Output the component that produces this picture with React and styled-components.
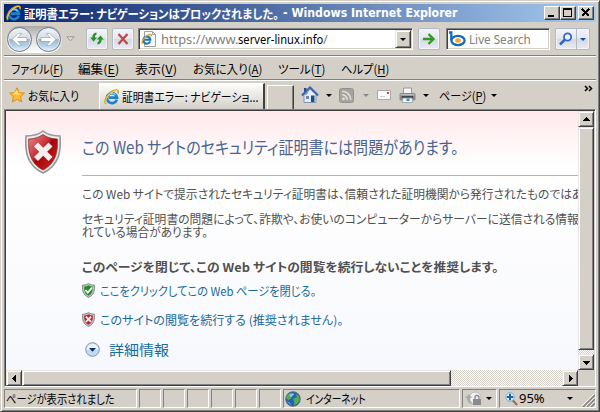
import React, { useLayoutEffect, useRef, useState } from 'react';
import styled, { createGlobalStyle, css } from 'styled-components';

const Global = createGlobalStyle`
  * { box-sizing: border-box; }
  body { margin: 0; background: #d4d0c8; }
  svg { display: block; flex: none; }
`;

const jp = '"Noto Sans CJK JP", sans-serif';
const raised = css`
  background: #d4d0c8;
  border: 1px solid;
  border-color: #e8e6e1 #404040 #404040 #e8e6e1;
  box-shadow: inset 1px 1px #fff, inset -1px -1px #808080;
`;
const row = css`display: flex; align-items: center;`;

const Slot = styled.span`
  display: block;
  flex: none;
  width: ${p => p.$w}px;
  height: ${p => p.$size + 1}px;
  margin-left: ${p => p.$ml || 0}px;
  font: ${p => (p.$bold ? 700 : 400)} ${p => p.$size}px/${p => p.$size + 1}px ${p => p.$font || jp};
  font-feature-settings: "palt";
  color: ${p => p.$color || '#000'};
`;
const Ink = styled.span`
  display: block;
  width: max-content;
  white-space: pre;
  transform-origin: 0 50%;
  u { text-underline-offset: 2px; }
`;

/* Condenses a line of text to the given width, whatever font metrics are in use. */
function Label({ w, size = 12, ml, bold, font, color, children }) {
  const ref = useRef(null);
  const [scale, setScale] = useState(1);
  useLayoutEffect(() => { setScale(w / ref.current.offsetWidth); }, [w]);
  return (
    <Slot $w={w} $size={size} $ml={ml} $bold={bold} $font={font} $color={color}>
      <Ink ref={ref} style={{ transform: `scaleX(${scale})` }}>{children}</Ink>
    </Slot>
  );
}

const Window = styled.div`
  width: 600px; height: 412px; overflow: hidden;
  display: flex; flex-direction: column;
  padding: 2px;
  background: #d4d0c8;
  border: 1px solid;
  border-color: #d4d0c8 #404040 #404040 #d4d0c8;
  box-shadow: inset 1px 1px #fff, inset -1px -1px #808080;
`;
const Frame = styled.div`
  display: flex; flex-direction: column; margin: 1px 1px 0;
`;
const TitleBar = styled.div`
  ${row}
  height: 18px; flex: none; padding: 0 2px;
  background: linear-gradient(90deg, #0a246a, #a6caf0);
`;
const Captions = styled.div`display: flex; margin-left: auto;`;
const CaptionButton = styled.div`
  ${raised}
  width: 16px; height: 14px; margin-left: ${p => p.$gap || 0}px;
  border-top-color: #fff; border-left-color: #fff; box-shadow: inset -1px -1px #808080;
`;
const Bar = styled.div`
  ${row}
  flex: none;
  height: ${p => p.$h}px;
  ${p => p.$line && 'border-bottom: 1px solid #fff; box-shadow: inset 0 -1px #808080;'}
`;
const Travel = styled.div`
  ${row}
  justify-content: space-between;
  width: 56px; height: 27px; margin-left: 2px; padding: 0 1px;
  border-radius: 14px;
  background: linear-gradient(#a9a9a9, #dedcd8 45%, #fff);
`;
const Orb = styled.div`
  ${row}
  justify-content: center;
  width: 25px; height: 25px; border-radius: 50%;
  border: 1px solid #6f7884;
  background: linear-gradient(#f2f5f8 0, #d5dbe3 46%, #a5b3c4 50%, #b4d4ea 78%, #e4f5fd 100%);
  box-shadow: inset 0 0 0 1px #e6edf3;
`;
const Tool = styled.div`
  ${row}
  justify-content: center; flex: none;
  width: 22px; height: 22px; margin-left: ${p => p.$ml || 0}px;
  border: 1px solid #b3bac6; border-radius: 2px;
  background: linear-gradient(#f4f5f8, #e4e6ed 50%, #d5d9e4 51%, #e9ebf2);
  box-shadow: inset 0 0 0 1px #f3f4f8;
`;
const SplitTool = styled(Tool)`width: 35px; justify-content: flex-start;`;
const SplitArrow = styled.div`
  ${row}
  justify-content: center; width: 13px; height: 20px; margin-left: auto; border-left: 1px solid #b3bac6;
`;
const Field = styled.div`
  ${row}
  flex: none; width: ${p => p.$w}px; height: 22px; margin-left: ${p => p.$ml}px; padding-left: 2px;
  background: #fff;
  border: 1px solid; border-color: #808080 #fff #fff #808080;
  box-shadow: inset 1px 1px #404040, inset -1px -1px #d4d0c8;
`;
const DropButton = styled.div`
  ${raised} ${row}
  justify-content: center; width: 16px; height: 18px; margin: 0 1px 0 auto;
`;
const Tri = styled.i`
  display: block; flex: none; width: 0; height: 0; margin-left: ${p => p.$ml || 0}px;
  border: 3px solid transparent; border-bottom: 0;
  border-top-color: ${p => p.$color || '#000'};
`;
const Tab = styled.div`
  ${row}
  align-self: flex-end; flex: none; width: 166px; height: 26px; margin-left: 20px; padding-left: 4px;
  background: linear-gradient(#fdfdfc, #e4e2dd 60%, #d4d0c8);
  border-top: 1px solid #fff; border-left: 1px solid #fff; border-right: 2px solid #404040;
`;
const NewTab = styled.div`
  align-self: flex-end; flex: none; width: 27px; height: 24px; margin-left: 2px;
  border-top: 1px solid #fff; border-left: 1px solid #fff; border-right: 1px solid #404040;
  box-shadow: inset -1px 0 #808080;
`;
const Gap = styled.span`flex: none; width: ${p => p.$w}px;`;
const Overflow = styled.div`align-self: flex-start; margin: 4px 3px 0 auto;`;

const Viewport = styled.div`
  display: grid; flex: none;
  grid-template: 259px 16px / 572px 16px;
  width: 592px; height: 278px;
  border: 1px solid; border-color: #808080 #fff #fff #808080;
  box-shadow: inset 1px 1px #404040, inset -1px -1px #d4d0c8;
  padding: 1px;
`;
const Page = styled.div`
  display: flex; overflow: hidden; padding: 19px 0 0 18px;
  background: linear-gradient(#ffe8eb 0, #fff 55px, #fdfdfe 120px, #f7f8fd 259px);
`;
const Article = styled.div`width: 501px; margin-left: 20px; flex: none;`;
const Heading = styled.div`
  height: 46px; padding-top: 8px; border-bottom: 1px solid #b0b3bf;
`;
const Line = styled.div`
  ${row}
  height: ${p => p.$h || 14}px; margin-top: ${p => p.$mt || 0}px; margin-left: ${p => p.$ml || 0}px;
`;
const Scroll = styled.div`
  display: flex; flex-direction: ${p => (p.$vertical ? 'column' : 'row')};
  background: repeating-conic-gradient(#fff 0 25%, #d4d0c8 0 50%) 0 0 / 2px 2px;
`;
const ScrollButton = styled.div`
  ${raised} ${row}
  justify-content: center; flex: none; width: 16px; height: 16px;
`;
const Thumb = styled.div`
  ${raised}
  flex: none; width: ${p => p.$w || 16}px; height: ${p => p.$h || 16}px;
  margin: ${p => (p.$h ? '0 0 auto' : '0 auto 0 0')};
`;
const Corner = styled.div`background: #d4d0c8;`;
const Status = styled.div`
  display: flex; gap: 2px; height: 19px; margin-top: 2px; flex: none;
`;
const Pane = styled.div`
  ${row}
  flex: none; width: ${p => p.$w}px; height: 19px; padding-left: 1px;
  border: 1px solid; border-color: #808080 #fff #fff #808080;
`;
const Grip = styled.div`align-self: flex-end; margin-left: auto;`;

const IE = ({ s = 16 }) => (
  <svg width={s} height={s} viewBox="0 0 16 16" fill="none">
    <path d="M12.8 10.7A5 5 0 1 1 13 8.6H5" stroke="#1d80d0" strokeWidth="2.7" />
    <path d="M4.5 6.6A4.1 4.1 0 0 1 11.5 6" stroke="#7ccff7" strokeWidth="1.4" />
    <path d="M2 14.8C-.8 12 4 3.8 10 1.6c3.4-1.2 4.8.3 3.8 2.8" stroke="#d49b20" strokeWidth="1.8" />
    <path d="M2 14C.6 11 5 4.2 10.3 2c2-.8 3.4-.5 3.5.5" stroke="#ffe16b" strokeWidth=".8" />
  </svg>
);
const PageIE = () => (
  <svg width="16" height="16" viewBox="0 0 16 16" fill="none">
    <path d="M3.5.5h8l3 3v12h-11z" fill="#fafafa" stroke="#a0a0a0" />
    <path d="M11.5.5v3h3" stroke="#a0a0a0" />
    <path d="M9.2 10.4A3.6 3.6 0 1 1 9.4 8.8H3.8" stroke="#1673c4" strokeWidth="2" />
    <path d="M1.6 13C-.2 11 3.3 5 8 3.6c2.2-.5 2.6.5 2.2 1.8" stroke="#dba52b" strokeWidth="1.4" />
  </svg>
);
const Arrow = ({ flip }) => (
  <svg width="17" height="15" viewBox="0 0 17 15">
    <path transform={flip ? 'matrix(-1 0 0 1 17 0)' : undefined} d="M1 7.5 7.3 1.6h3.4L6.8 5.5H16v4H6.8l3.900 3.900H7.3z" fill="#fff" stroke="#8496ad" strokeWidth=".6" />
  </svg>
);
const Shield = ({ w, h, kind }) => (
  <svg width={w} height={h} viewBox="0 0 38 44">
    <defs>
      <linearGradient id={`face-${kind}`} x1="0" y1="0" x2="1" y2="1">
        <stop offset="0" stopColor={kind === 'ok' ? '#78bd6d' : '#e58a8a'} />
        <stop offset=".42" stopColor={kind === 'ok' ? '#279b2c' : '#c63035'} />
        <stop offset=".5" stopColor={kind === 'ok' ? '#087d12' : '#a50409'} />
        <stop offset="1" stopColor={kind === 'ok' ? '#3bab3f' : '#d22a22'} />
      </linearGradient>
    </defs>
    <path d="M19 1C14 5 8 6 2 6c-1 14 0 29 17 37C36 35 37 20 36 6 30 6 24 5 19 1z" fill="#e9e9e9" stroke="#969799" strokeWidth="1.6" />
    <path d="M19 4.5C14 8 9 9 4.7 9c-.5 12 1 24 14.3 31C32.3 33 34 21 33.3 9 29 9 24 8 19 4.5z" fill={`url(#face-${kind})`} stroke="#8d2c30" strokeWidth=".8" />
    <path d="m12 14.500 14.500 14.500M26.500 14.500 12 29" fill="none" stroke="#f0eeef" strokeWidth="5.600" />
  </svg>
);
const Badge = ({ ok }) => (
  <svg width="13" height="15" viewBox="0 0 13 15">
    <path d="M6.500.600C4.700 1.700 2.600 2.200.600 2.200c-.300 5.300.400 9.900 5.900 12.200 5.500-2.300 6.200-6.900 5.900-12.200-2 0-4.100-.5-5.900-1.600z" fill="#c6c7c7" stroke="#858788" strokeWidth="1" />
    <path d="M6.500 2.200C5.200 3 3.800 3.400 2.200 3.400c-.1 4.200.5 7.500 4.300 9.400 3.800-1.900 4.400-5.200 4.300-9.400-1.600 0-3-.400-4.300-1.200z" fill={ok ? '#199125' : '#bd252c'} />
    {ok
      ? <path d="m3.500 7 2.300 2.600L10.200 4.500" fill="none" stroke="#fff" strokeWidth="1.800" />
      : <path d="m3.900 4.700 5.200 5.200M9.100 4.700 3.900 9.900" fill="none" stroke="#f6eeee" strokeWidth="1.900" />}
  </svg>
);
const Refresh = () => (
  <svg width="16" height="16" viewBox="0 0 16 16" fill="#279329">
    <path d="M7.500 1.500v2.300C6.300 4.100 5.900 5 5.900 6.500h2.300L4.600 10.500 1 6.500h2.300C3.400 3.500 4.800 1.700 7.500 1.500z" />
    <path d="M8.500 13.500v-2.300c1.200-.3 1.600-1.200 1.600-2.700H7.800l3.600-4 3.600 4h-2.300c-.1 3-1.500 4.800-4.200 5z" />
  </svg>
);
const Cross = () => (
  <svg width="14" height="14" viewBox="0 0 14 14"><path d="m2.500 2 9 10M11.500 2l-9 10" stroke="#bb4a4c" strokeWidth="2.300" /></svg>
);
const Go = () => (
  <svg width="14" height="14" viewBox="0 0 14 14"><path d="M1 7h10M6.500 2l5 5-5 5" fill="none" stroke="#329a22" strokeWidth="2.400" /></svg>
);
const Bing = () => (
  <svg width="17" height="16" viewBox="0 0 17 16" fill="none">
    <path d="M0 1.500h2.300v8" stroke="#1768bd" strokeWidth="2.300" />
    <ellipse cx="9" cy="9.500" rx="6.600" ry="4.600" stroke="#1768bd" strokeWidth="2.300" />
    <ellipse cx="9" cy="9.500" rx="2.700" ry="2.200" fill="#f5a431" />
  </svg>
);
const Magnifier = () => (
  <svg width="16" height="16" viewBox="0 0 16 16" fill="none">
    <path d="m2 13.500 5-5" stroke="#2e69c5" strokeWidth="2.500" />
    <circle cx="9.600" cy="6" r="3.600" stroke="#2e69c5" strokeWidth="1.800" fill="#edf5fd" />
  </svg>
);
const Star = () => (
  <svg width="16" height="16" viewBox="0 0 16 16">
    <path d="m8 .8 2.200 4.700 5.200.600-3.800 3.600 1 5.200L8 12.400l-4.600 2.500 1-5.200L.6 6.100l5.200-.600z" fill="#ffbd2e" stroke="#db8617" strokeWidth=".9" />
    <path d="m8 3 1.300 3.300 3.200.400-2.400 1L4 7z" fill="#ffe184" />
  </svg>
);
const House = () => (
  <svg width="18" height="18" viewBox="0 0 18 18">
    <path d="M3 2h2.500v5H3z" fill="#34477c" />
    <path d="M3 8 9.500 3 15 8v8.500H3z" fill="#e6edf6" stroke="#8294b3" />
    <path d="m1 9.500 8-8 8 8" fill="none" stroke="#3f62a8" strokeWidth="2.200" />
    <path d="M9 2 6 8.500 3 9z" fill="#6f91cb" />
    <path d="M5 10h3v3H5z" fill="#6a8aaf" /><path d="M10 9.500h3.500v6.500H10z" fill="#204b83" />
  </svg>
);
const Rss = () => (
  <svg width="15" height="15" viewBox="0 0 15 15" fill="none">
    <rect x=".5" y=".5" width="14" height="14" rx="2" fill="#a5a4a1" stroke="#929292" />
    <circle cx="4.500" cy="10.800" r="1.400" fill="#e4e2df" />
    <path d="M3.200 6.800a5 5 0 0 1 5 5M3.200 3.200a8.500 8.500 0 0 1 8.500 8.600" stroke="#e4e2df" strokeWidth="1.600" />
  </svg>
);
const Mail = () => (
  <svg width="14" height="10" viewBox="0 0 14 10">
    <path d="M.5.500h13v9H.5z" fill="#fafafa" stroke="#a8a8ab" />
    <path d="M10 2h2v2h-2z" fill="#e33c36" /><path d="M3 6.500h5" stroke="#ccc" />
  </svg>
);
const Printer = () => (
  <svg width="17" height="17" viewBox="0 0 17 17">
    <path d="M4.500 1h8v6h-8z" fill="#f5f5f3" stroke="#999" />
    <rect x=".5" y="6" width="16" height="7.500" rx="1.500" fill="#85878a" />
    <path d="M1.500 7h14v1.500h-14z" fill="#b9bbbd" /><path d="M3 9h11v2H3z" fill="#424548" />
    <path d="M4 11h9l.8 4.500H3.200z" fill="#f4f7fa" stroke="#999" strokeWidth=".8" /><path d="M7.500 11.500h3v2.500h-3z" fill="#368dcc" />
  </svg>
);
const Globe = () => (
  <svg width="16" height="16" viewBox="0 0 16 16">
    <circle cx="8" cy="8" r="7.300" fill="#2362b4" stroke="#555f70" strokeWidth=".8" />
    <path d="M2 4.500 5 2l4 .500-1 2-2 1v2L3.500 9 1 7zM8 8l4-2-1-3 2.500 1 1.300 5-2.800 4-3.500 1.500 1-3z" fill="#5aad4b" />
    <path d="m4 3.500 4-1 1 1-3 3zM2 10l3 2 1 2.500" fill="#79cbe8" />
  </svg>
);
const Expander = () => (
  <svg width="15" height="15" viewBox="0 0 15 15">
    <circle cx="7.500" cy="7.500" r="6.800" fill="#bcdcf3" stroke="#8597b3" />
    <path d="M1.800 7.500a5.700 5.700 0 0 1 11.400 0z" fill="#f0f5fb" />
    <path d="M4 6h7L7.500 9.800z" fill="#102d66" />
  </svg>
);
const Protected = () => (
  <svg width="18" height="16" viewBox="0 0 18 16">
    <circle cx="10" cy="7" r="6" fill="#eee" stroke="#bbb" />
    <path d="m0 7 4-4 3 4H5c0 3 1 5 3 6-4 0-6-3-6-6z" fill="#aaa" />
    <path d="M8 8h8v6H8z" fill="#8a8a8a" /><path d="M10 8V6.500a2 2 0 0 1 4 0V8" fill="none" stroke="#888" strokeWidth="1.300" />
  </svg>
);
const Zoom = () => (
  <svg width="13" height="14" viewBox="0 0 13 14">
    <path d="m7.500 8 4.500 5" stroke="#9b7151" strokeWidth="2.300" />
    <circle cx="5" cy="5" r="4.300" fill="#d4ecfc" stroke="#86adc9" />
    <path d="M5 1.800v6.400M1.800 5h6.400" stroke="#1761ad" strokeWidth="2" />
  </svg>
);
const Point = ({ d }) => (
  <svg width="7" height="7" viewBox="0 0 7 7" shapeRendering="crispEdges"><path d={d} /></svg>
);
const CaptionIcon = ({ d, sw = 2 }) => (
  <svg width="13" height="11" viewBox="0 0 13 11" shapeRendering="crispEdges"><path d={d} fill="none" stroke="#000" strokeWidth={sw} /></svg>
);
const ResizeGrip = () => (
  <svg width="13" height="13" viewBox="0 0 13 13">
    <path d="M1 13 13 1M5 13l8-8M9 13l4-4" stroke="#858585" strokeWidth="1.600" />
    <path d="M0 12 12 0M4 12l8-8M8 12l4-4" stroke="#fff" strokeWidth=".8" />
  </svg>
);

const tahoma = '"DejaVu Sans Condensed", "DejaVu Sans", sans-serif';
const light = '"Noto Sans", sans-serif';
const menus = [
  ['ファイル', 'F', 52, 7], ['編集', 'E', 41, 15], ['表示', 'V', 42, 16],
  ['お気に入り', 'A', 69, 16], ['ツール', 'T', 47, 16], ['ヘルプ', 'H', 48, 16],
];
const link = '#176b9b';
const body = '#505050';

export default function App() {
  return (
    <Window>
      <Global />
      <Frame>
        <TitleBar>
          <IE />
          <Label w={255} ml={2} bold color="#fff">証明書エラー: ナビゲーションはブロックされました。</Label>
          <Label w={174} ml={4} bold color="#fff" font={tahoma}>- Windows Internet Explorer</Label>
          <Captions>
            <CaptionButton><CaptionIcon d="M3 9h6" /></CaptionButton>
            <CaptionButton><CaptionIcon sw={1} d="M2.500 1.500h8v8h-8zM2 2.500h9" /></CaptionButton>
            <CaptionButton $gap={2}><CaptionIcon sw={1.500} d="m3 2 7 7M10 2 3 9" /></CaptionButton>
          </Captions>
        </TitleBar>

        <Bar $h={35} $line>
          <Travel><Orb><Arrow /></Orb><Orb><Arrow flip /></Orb></Travel>
          <Gap $w={4} />
          <svg width="9" height="6" viewBox="0 0 9 6"><path d="M.8.8h7.400l-3.700 4z" fill="#ddd" stroke="#999" /></svg>
          <Tool $ml={11}><Refresh /></Tool>
          <Tool $ml={4}><Cross /></Tool>
          <Field $w={275} $ml={4}>
            <PageIE />
            <Label w={77} ml={4} size={13} color="#808080" font={light}>https://www.</Label>
            <Label w={85} size={13} font={light}>server-linux.info</Label>
            <Label w={5} size={13} color="#808080" font={light}>/</Label>
            <DropButton><Tri /></DropButton>
          </Field>
          <Tool $ml={5}><Go /></Tool>
          <Field $w={104} $ml={6}>
            <Bing />
            <Label w={62} ml={3} size={13} color="#808080" font={light}>Live Search</Label>
          </Field>
          <SplitTool $ml={5}><Gap $w={2} /><Magnifier /><SplitArrow><Tri $color="#174f9b" /></SplitArrow></SplitTool>
        </Bar>

        <Bar $h={24} $line>
          {menus.map(([name, key, w, ml]) => (
            <Label key={key} w={w} ml={ml}>{name}(<u>{key}</u>)</Label>
          ))}
        </Bar>

        <Bar $h={28}>
          <Gap $w={5} /><Star />
          <Label w={51} ml={3}>お気に入り</Label>
          <Tab><IE /><Label w={136} ml={2}>証明書エラー: ナビゲーショ...</Label></Tab>
          <NewTab />
          <Gap $w={7} /><House /><Tri $ml={7} />
          <Gap $w={7} /><Rss /><Tri $ml={9} $color="#888" />
          <Gap $w={8} /><Mail />
          <Gap $w={8} /><Printer /><Tri $ml={7} />
          <Label w={47} ml={10}>ページ(<u>P</u>)</Label><Tri $ml={5} />
          <Overflow>
            <svg width="9" height="7" viewBox="0 0 9 7"><path d="m1 1 2.500 2.500L1 6M5 1l2.500 2.500L5 6" fill="none" stroke="#000" strokeWidth="1.500" /></svg>
          </Overflow>
        </Bar>

        <Viewport>
          <Page>
            <Shield w={38} h={44} kind="bad" />
            <Article>
              <Heading><Label w={377} size={17} color="#48648f">この Web サイトのセキュリティ証明書には問題があります。</Label></Heading>
              <Line $mt={10}><Label w={501} color={body}>この Web サイトで提示されたセキュリティ証明書は、信頼された証明機関から発行されたものではあ</Label></Line>
              <Line $mt={12} $h={13}><Label w={497} color={body}>セキュリティ証明書の問題によって、詐欺や、お使いのコンピューターからサーバーに送信される情報</Label></Line>
              <Line $h={13}><Label w={126} color={body}>れている場合があります。</Label></Line>
              <Line $mt={21}><Label w={416} bold color={body}>このページを閉じて、この Web サイトの閲覧を続行しないことを推奨します。</Label></Line>
              <Line $mt={9} $h={16}><Badge ok /><Label w={216} ml={5} color={link}>ここをクリックしてこの Web ページを閉じる。</Label></Line>
              <Line $mt={13} $h={16}><Badge /><Label w={243} ml={5} color={link}>このサイトの閲覧を続行する (推奨されません)。</Label></Line>
              <Line $mt={14} $h={16} $ml={3}><Expander /><Label w={60} ml={9} size={14} color={link}>詳細情報</Label></Line>
            </Article>
          </Page>
          <Scroll $vertical>
            <ScrollButton><Point d="M3 1h1v1h1v1h1v1h1v1H0V4h1V3h1V2h1z" /></ScrollButton>
            <Thumb $h={223} />
            <ScrollButton><Point d="M0 2h7v1H6v1H5v1H4v1H3V5H2V4H1V3H0z" /></ScrollButton>
          </Scroll>
          <Scroll>
            <ScrollButton><Point d="M5 0v7H4V6H3V5H2V4H1V3h1V2h1V1h1V0z" /></ScrollButton>
            <Thumb $w={429} />
            <ScrollButton><Point d="M2 0h1v1h1v1h1v1h1v1H5v1H4v1H3v1H2z" /></ScrollButton>
          </Scroll>
          <Corner />
        </Viewport>

        <Status>
          <Pane $w={133}><Label w={109}>ページが表示されました</Label></Pane>
          {[0, 1, 2, 3, 4, 5].map(i => <Pane key={i} $w={22} />)}
          <Pane $w={177}><Globe /><Label w={60} ml={5}>インターネット</Label></Pane>
          <Pane $w={35}><Gap $w={1} /><Protected /><Tri $ml={3} /></Pane>
          <Pane $w={97}>
            <Gap $w={4} /><Zoom /><Label w={26} ml={1} size={12} font={light}>95%</Label><Tri $ml={22} />
            <Grip><ResizeGrip /></Grip>
          </Pane>
        </Status>
      </Frame>
    </Window>
  );
}
